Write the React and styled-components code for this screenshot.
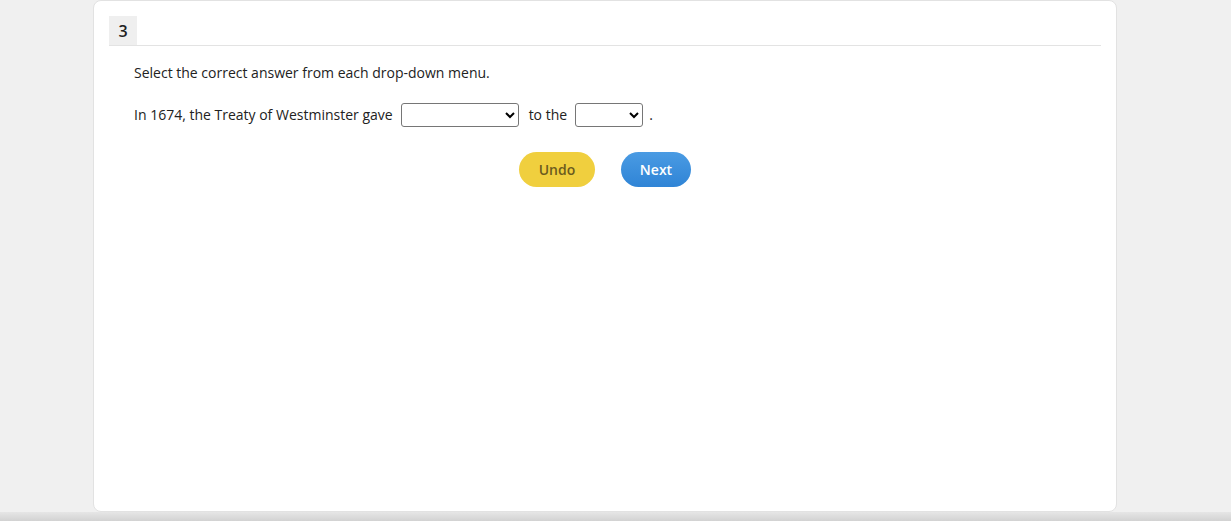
import styled, { createGlobalStyle } from "styled-components";

const GlobalStyle = createGlobalStyle`
  html, body {
    margin: 0;
    padding: 0;
    background: #f0f0f0;
    font-family: "Open Sans", "Liberation Sans", sans-serif;
    color: #222;
  }
`;

const App = () => {
  return (
    <>
      <GlobalStyle />
      <Page>
        <Card>
          <Header>
            <QuestionNumber>3</QuestionNumber>
          </Header>
          <Content>
            <Prompt>Select the correct answer from each drop-down menu.</Prompt>
            <Sentence>
              <span>In 1674, the Treaty of Westminster gave</span>
              <Dropdown $width={118} defaultValue="">
                <option value=""></option>
                <option>New Netherland</option>
                <option>New Sweden</option>
              </Dropdown>
              <span>to the</span>
              <Dropdown $width={68} defaultValue="">
                <option value=""></option>
                <option>English</option>
                <option>Dutch</option>
              </Dropdown>
              <Period>.</Period>
            </Sentence>
            <Actions>
              <PillButton $variant="undo">Undo</PillButton>
              <PillButton $variant="next">Next</PillButton>
            </Actions>
          </Content>
        </Card>
      </Page>
      <BottomBar />
    </>
  );
};

const Page = styled.div`
  padding-left: 93px;
  height: 512px;
  box-sizing: border-box;
`;

const Card = styled.div`
  width: 1024px;
  height: 512px;
  box-sizing: border-box;
  background: #fff;
  border: 1px solid #e2e2e2;
  border-radius: 8px;
  padding: 15px 15px;
`;

const Header = styled.div`
  display: flex;
  border-bottom: 1px solid #e3e3e3;
`;

const QuestionNumber = styled.div`
  width: 28px;
  height: 29px;
  background: #efefef;
  display: flex;
  align-items: center;
  justify-content: center;
  font-size: 16px;
  font-weight: 600;
  color: #222;
`;

const Content = styled.div`
  padding: 17px 0 0 25px;
  display: flex;
  flex-direction: column;
`;

const Prompt = styled.div`
  font-size: 14px;
  line-height: 20px;
`;

const Sentence = styled.div`
  margin-top: 20px;
  display: flex;
  align-items: center;
  gap: 9px;
  font-size: 14px;
  line-height: 24px;
`;

const Dropdown = styled.select`
  width: ${(p) => p.$width}px;
  height: 24px;
  margin: 0 1px 0 -1px;
  border: 1px solid #767676;
  border-radius: 3px;
  background: #fff;
  font-family: inherit;
  font-size: 13px;
  padding: 0 2px;
`;

const Period = styled.span`
  margin-left: -4px;
`;

const Actions = styled.div`
  margin-top: 25px;
  margin-left: -25px;
  display: flex;
  justify-content: center;
  gap: 26px;
`;

const PillButton = styled.button`
  height: 35px;
  border: none;
  border-radius: 18px;
  padding: 0 18px;
  font-family: inherit;
  font-size: 14px;
  font-weight: 600;
  cursor: pointer;
  background: ${(p) =>
    p.$variant === "next"
      ? "linear-gradient(180deg, #4a9be3 0%, #2f84d6 100%)"
      : "#f0cf3e"};
  color: ${(p) => (p.$variant === "next" ? "#fff" : "#6b5b1e")};
  min-width: ${(p) => (p.$variant === "next" ? "70px" : "76px")};
`;

const BottomBar = styled.div`
  height: 9px;
  background: linear-gradient(180deg, #e6e6e6 0%, #d2d2d2 100%);
`;

export default App;
